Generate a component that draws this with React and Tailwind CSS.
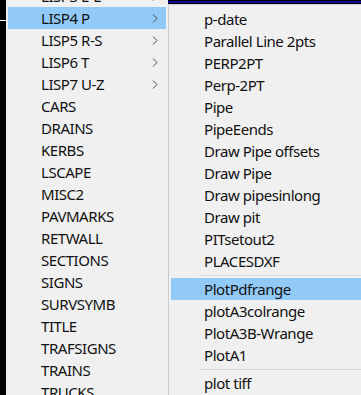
import React from 'react';

const leftItems = [
  { label: 'LISP3 E-L', sub: true },
  { label: 'LISP4 P', sub: true, active: true },
  { label: 'LISP5 R-S', sub: true },
  { label: 'LISP6 T', sub: true },
  { label: 'LISP7 U-Z', sub: true },
  { label: 'CARS' },
  { label: 'DRAINS' },
  { label: 'KERBS' },
  { label: 'LSCAPE' },
  { label: 'MISC2' },
  { label: 'PAVMARKS' },
  { label: 'RETWALL' },
  { label: 'SECTIONS' },
  { label: 'SIGNS' },
  { label: 'SURVSYMB' },
  { label: 'TITLE' },
  { label: 'TRAFSIGNS' },
  { label: 'TRAINS' },
  { label: 'TRUCKS' },
];

// '-' marks a separator line
const subItems = [
  'p-date',
  'Parallel Line 2pts',
  'PERP2PT',
  'Perp-2PT',
  'Pipe',
  'PipeEends',
  'Draw Pipe offsets',
  'Draw Pipe',
  'Draw pipesinlong',
  'Draw pit',
  'PITsetout2',
  'PLACESDXF',
  '-',
  'PlotPdfrange',
  'plotA3colrange',
  'PlotA3B-Wrange',
  'PlotA1',
  '-',
  'plot tiff',
];

const Chevron = () => (
  <svg width="6" height="9" viewBox="0 0 6 9" className="shrink-0">
    <path d="M1 0.5 L5 4.5 L1 8.5" fill="none" stroke="#4a4a4a" strokeWidth="1" />
  </svg>
);

const MenuRow = ({ label, active, sub }) => (
  <div
    className={`flex h-[22px] items-center pl-[33px] pr-[8px] ${active ? 'bg-[#91c9f7]' : ''}`}
  >
    <span className="flex-1 whitespace-nowrap pt-[1px] text-[#111]">{label}</span>
    {sub && <Chevron />}
  </div>
);

export default function App() {
  return (
    <div
      className="flex h-[395px] w-[361px] overflow-hidden bg-black text-[15px] leading-none tracking-[-0.45px]"
      style={{ fontFamily: '"Segoe UI", "Noto Sans", sans-serif' }}
    >
      {/* dark drawing area strip at the left */}
      <div className="w-[6px] shrink-0 pt-[20px]">
        <div className="h-[1px] bg-white" />
      </div>

      {/* parent menu */}
      <div className="-mt-[15px] w-[162px] shrink-0 bg-[#f0f0f0] px-[2px]">
        {leftItems.map((item) => (
          <MenuRow key={item.label} {...item} />
        ))}
      </div>

      {/* submenu */}
      <div className="flex min-w-0 flex-1 flex-col">
        <div className="h-[4px] shrink-0 pt-[1px]">
          <div className="h-[2px] bg-[#0c0c9c]" />
        </div>
        <div className="flex-1 border-l border-t border-[#cccccc] bg-[#f0f0f0] pl-[2px] pt-[3px]">
          {subItems.map((label, i) =>
            label === '-' ? (
              <div key={i} className="flex h-[6px] items-center pl-[28px]">
                <div className="h-[1px] flex-1 bg-[#d7d7d7]" />
              </div>
            ) : (
              <MenuRow key={label} label={label} active={label === 'PlotPdfrange'} />
            )
          )}
        </div>
      </div>
    </div>
  );
}
